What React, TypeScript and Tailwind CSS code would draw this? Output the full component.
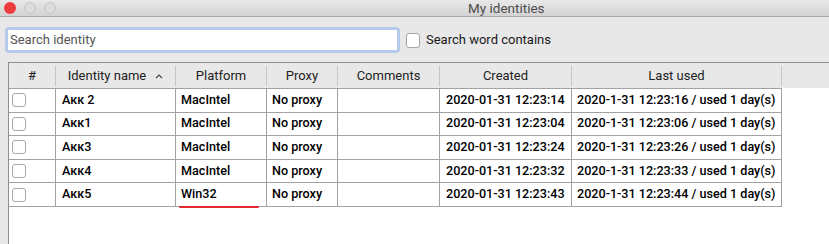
const rows = [
  { name: "Акк 2", platform: "MacIntel", created: "2020-01-31 12:23:14", last: "2020-1-31 12:23:16 / used 1 day(s)" },
  { name: "Акк1", platform: "MacIntel", created: "2020-01-31 12:23:04", last: "2020-1-31 12:23:06 / used 1 day(s)" },
  { name: "Акк3", platform: "MacIntel", created: "2020-01-31 12:23:24", last: "2020-1-31 12:23:26 / used 1 day(s)" },
  { name: "Акк4", platform: "MacIntel", created: "2020-01-31 12:23:32", last: "2020-1-31 12:23:33 / used 1 day(s)" },
  { name: "Акк5", platform: "Win32", created: "2020-01-31 12:23:43", last: "2020-1-31 12:23:44 / used 1 day(s)", mark: true },
];

const cols = "grid grid-cols-[47px_120px_91px_71px_102px_132px_210px_1fr]";

export default function App() {
  return (
    <div
      className="flex h-[244px] w-[829px] flex-col overflow-hidden bg-[#e8e8e8] text-[13px] text-black"
      style={{ fontFamily: 'Roboto, "Liberation Sans", Arial, sans-serif' }}
    >
      {/* title bar */}
      <div className="relative flex h-[17px] shrink-0 items-center border-b border-[#a9a9a9] bg-gradient-to-b from-[#e9e9e9] to-[#d3d3d3]">
        <div className="flex items-center gap-[8px] pl-[4px]">
          <span className="h-[12px] w-[12px] rounded-full bg-[#ee3b3f]" />
          <span className="h-[12px] w-[12px] rounded-full border border-[#c4c4c4] bg-[#dcdcdc]" />
          <span className="h-[12px] w-[12px] rounded-full border border-[#c4c4c4] bg-[#dcdcdc]" />
        </div>
        <span className="absolute left-[468px] top-[0px] text-[13.5px] leading-[16px] text-[#4d4d4d]">My identities</span>
      </div>

      {/* search row */}
      <div className="flex h-[45px] shrink-0 items-center gap-[6px] pl-[5px] pt-[1px]">
        <div className="flex h-[26px] w-[395px] items-center rounded-[4px] border-[3px] border-[#b5c9ea] bg-white pl-[2px]">
          <span className="text-[13px] text-[#555]">Search identity</span>
        </div>
        <span className="h-[15px] w-[14px] rounded-[3px] border border-[#a5a5a5] bg-white" />
        <span className="whitespace-nowrap text-[13px] text-[#1a1a1a]">Search word contains</span>
      </div>

      {/* table */}
      <div className="ml-[8px] flex flex-1 flex-col border-l border-t border-[#8f8f8f] bg-white">
        <div className={`${cols} h-[25px] shrink-0 bg-[#e8e8e8] text-[#222]`}>
          {["#", "Identity name", "Platform", "Proxy", "Comments", "Created", "Last used", ""].map((h, i) => (
            <div key={i} className="flex items-center justify-center py-[3px]">
              <div className={`flex h-full w-full items-center justify-center whitespace-nowrap ${i < 7 ? "border-r border-[#c6c6c6]" : ""}`}>
                {h}
                {i === 1 && (
                  <svg className="ml-[9px] mt-[1px]" width="8" height="5" viewBox="0 0 8 5">
                    <path d="M1 4 L4 1 L7 4" fill="none" stroke="#444" strokeWidth="1.1" />
                  </svg>
                )}
              </div>
            </div>
          ))}
        </div>
        <div className="flex flex-col">
          {rows.map((r, i) => (
            <div key={i} className={`${cols} h-[23.6px] whitespace-nowrap text-[12.6px] font-medium`}>
              <div className="flex items-center border-r border-t border-[#a2a2a2] pl-[3px]">
                <span className="h-[14px] w-[14px] rounded-[3px] border border-[#a8a8a8] bg-white" />
              </div>
              <div className="flex items-center border-r border-t border-[#a2a2a2] pl-[6px]">{r.name}</div>
              <div className="relative flex items-center border-r border-t border-[#a2a2a2] pl-[5px]">
                {r.platform}
                {r.mark && <span className="absolute left-[3px] top-[23px] h-[2px] w-[80px] rounded-full bg-[#e4282f]" />}
              </div>
              <div className="flex items-center border-r border-t border-[#a2a2a2] pl-[5px]">No proxy</div>
              <div className="flex items-center border-r border-t border-[#a2a2a2]" />
              <div className="flex items-center overflow-hidden border-r border-t border-[#a2a2a2] pl-[6px]">{r.created}</div>
              <div className="flex items-center overflow-hidden border-r border-t border-[#a2a2a2] pl-[5px]">{r.last}</div>
              <div />
            </div>
          ))}
          <div className={cols}>
            <div className="col-span-7 border-t border-[#a2a2a2]" />
          </div>
        </div>
      </div>
    </div>
  );
}
